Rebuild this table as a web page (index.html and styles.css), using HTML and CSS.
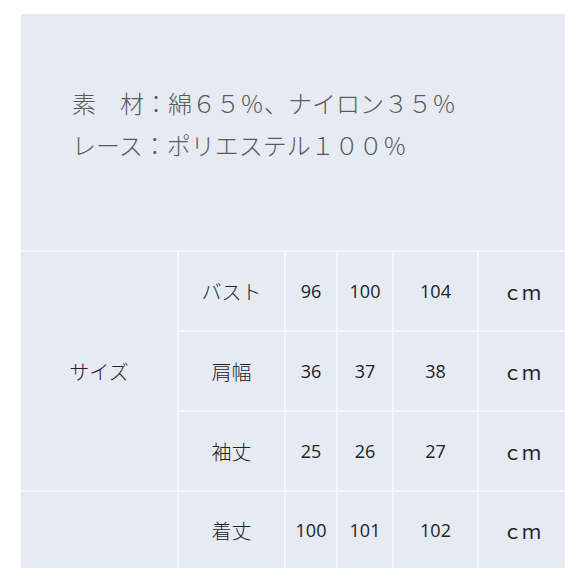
FILE: index.html
```html
<!DOCTYPE html>
<html lang="ja">
<head>
<meta charset="utf-8">
<link rel="stylesheet" href="styles.css">
</head>
<body>
<div class="sheet">
  <div class="material">
    <p class="line">素　材：綿６５％、ナイロン３５％</p>
    <p class="line">レース：ポリエステル１００％</p>
  </div>
  <table class="sizes">
    <colgroup>
      <col class="c1"><col class="c2"><col class="c3"><col class="c4"><col class="c5"><col class="c6">
    </colgroup>
    <tr>
      <td class="group" rowspan="3">サイズ</td>
      <td class="label">バスト</td><td class="num">96</td><td class="num">100</td><td class="num">104</td><td class="unit">ｃｍ</td>
    </tr>
    <tr>
      <td class="label">肩幅</td><td class="num">36</td><td class="num">37</td><td class="num">38</td><td class="unit">ｃｍ</td>
    </tr>
    <tr>
      <td class="label">袖丈</td><td class="num">25</td><td class="num">26</td><td class="num">27</td><td class="unit">ｃｍ</td>
    </tr>
    <tr class="last">
      <td class="group"></td>
      <td class="label">着丈</td><td class="num">100</td><td class="num">101</td><td class="num">102</td><td class="unit">ｃｍ</td>
    </tr>
  </table>
</div>
</body>
</html>
```
FILE: styles.css
```css
html, body {
  margin: 0;
  padding: 0;
  background: #ffffff;
}
body {
  padding: 14px 0 0 21px;
  font-family: "Noto Sans CJK JP", "Noto Sans", sans-serif;
}
.sheet {
  width: 544px;
  height: 554px;
  background: #e6ebf3;
  display: flex;
  flex-direction: column;
}
.material {
  height: 236px;
  padding-left: 51px;
  padding-bottom: 16px;
  display: flex;
  flex-direction: column;
  justify-content: center;
  box-sizing: border-box;
}
.line {
  margin: 0;
  font-size: 24px;
  font-weight: 300;
  line-height: 42px;
  color: #5a5a5a;
}
.sizes {
  border-collapse: collapse;
  table-layout: fixed;
  width: 544px;
}
.c1 { width: 157px; }
.c2 { width: 107px; }
.c3 { width: 52px; }
.c4 { width: 56px; }
.c5 { width: 85px; }
.c6 { width: 87px; }
.sizes td {
  border: 2px solid #f3f6fb;
  height: 78px;
  padding: 0;
  text-align: center;
  vertical-align: middle;
  color: #222222;
}
.sizes td:first-child { border-left: none; }
.sizes td:last-child { border-right: none; }
.sizes tr.last td { border-bottom: none; height: 76px; }
.group,
.label {
  font-size: 20px;
  font-weight: 300;
  color: #4a4a4a;
}
.num {
  font-family: "Open Sans", "Liberation Sans", sans-serif;
  font-size: 18px;
  color: #1a1a1a;
}
.unit {
  font-family: "Noto Sans CJK JP", sans-serif;
  font-size: 19px;
  color: #1a1a1a;
}
```
